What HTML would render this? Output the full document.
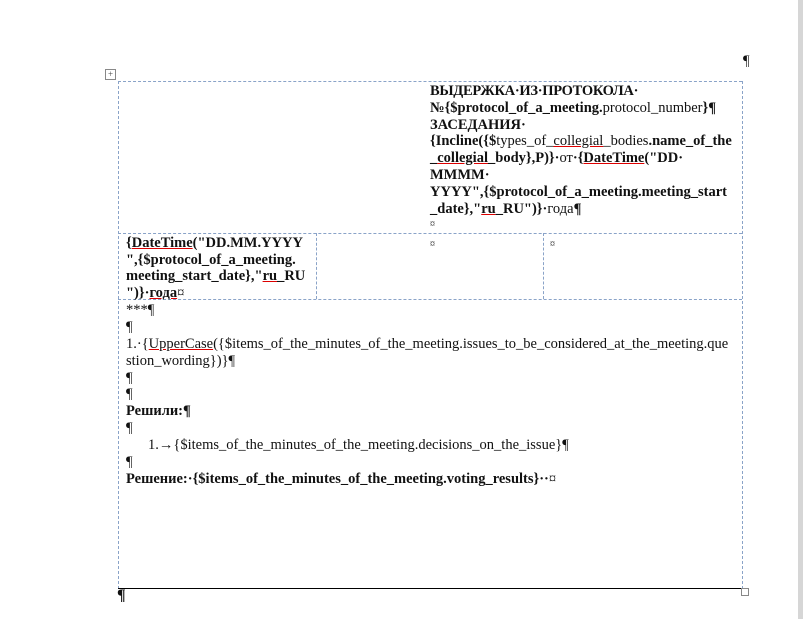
<!DOCTYPE html>
<html><head><meta charset="utf-8"><style>
body{margin:0;width:803px;height:619px;background:#fff;position:relative;overflow:hidden;font-family:"Liberation Serif",serif;font-size:14.5px;color:#111}
.l{position:absolute;white-space:nowrap;line-height:16px;margin-top:2px}
.b{font-weight:bold}
.dh{position:absolute;height:0;border-top:1px dashed #8aa3c8}
.dv{position:absolute;width:0;border-left:1px dashed #8aa3c8}
.u{text-decoration:underline;text-decoration-color:#d00}
</style></head><body>
<div style="position:absolute;right:0;top:0;width:5px;height:619px;background:#d6d6d6"></div>
<div class="l" style="left:743px;top:51px">¶</div>
<div style="position:absolute;left:105px;top:69px;width:9px;height:9px;border:1px solid #888;font-size:9px;line-height:9px;text-align:center;color:#444">+</div>
<div class="dh" style="left:118px;top:81px;width:624px"></div>
<div class="dh" style="left:118px;top:233px;width:624px"></div>
<div class="dh" style="left:118px;top:299px;width:624px"></div>
<div class="dv" style="left:118px;top:81px;height:508px"></div>
<div class="dv" style="left:742px;top:81px;height:508px"></div>
<div class="dv" style="left:316px;top:233px;height:66px"></div>
<div class="dv" style="left:543px;top:233px;height:66px"></div>
<div style="position:absolute;left:118px;top:588px;width:624px;height:1px;background:#000"></div>
<div style="position:absolute;left:741px;top:588px;width:6px;height:6px;border:1px solid #888"></div>
<div class="l b" style="left:117px;top:586px;font-size:16px">¶</div>

<div class="l b" style="left:430px;top:81px;letter-spacing:-0.3px">ВЫДЕРЖКА·ИЗ·ПРОТОКОЛА·</div>
<div class="l b" style="left:430px;top:98px">№{$protocol_of_a_meeting.<span style="font-weight:normal">protocol_number</span>}¶</div>
<div class="l b" style="left:430px;top:115px">ЗАСЕДАНИЯ·</div>
<div class="l b" style="left:430px;top:131px">{Incline({$<span style="font-weight:normal">types_of_<span class="u">collegial</span>_bodies</span>.name_of_the</div>
<div class="l b" style="left:430px;top:148px">_<span class="u">collegial</span>_body},P)}·<span style="font-weight:normal">от</span>·{<span class="u">DateTime</span>("DD·</div>
<div class="l b" style="left:430px;top:165px">MMMM·</div>
<div class="l b" style="left:430px;top:182px">YYYY",{$protocol_of_a_meeting.meeting_start</div>
<div class="l b" style="left:430px;top:199px">_date},"<span class="u">ru</span>_RU")}·<span style="font-weight:normal">года</span>¶</div>
<div class="l" style="left:430px;top:215px;font-size:10px">¤</div>

<div class="l b" style="left:126px;top:233px">{<span class="u">DateTime</span>("DD.MM.YYYY</div>
<div class="l b" style="left:126px;top:250px">",{$protocol_of_a_meeting.</div>
<div class="l b" style="left:126px;top:266px">meeting_start_date},"<span class="u">ru</span>_RU</div>
<div class="l b" style="left:126px;top:283px">")}·<span class="u">года</span><span style="font-weight:normal">¤</span></div>
<div class="l" style="left:430px;top:235px;font-size:10px">¤</div>
<div class="l" style="left:550px;top:235px;font-size:10px">¤</div>

<div class="l" style="left:126px;top:300px">***¶</div>
<div class="l" style="left:126px;top:317px">¶</div>
<div class="l" style="left:126px;top:334px">1.·{<span class="u">UpperCase</span>({$items_of_the_minutes_of_the_meeting.issues_to_be_considered_at_the_meeting.que</div>
<div class="l" style="left:126px;top:351px">stion_wording})}¶</div>
<div class="l" style="left:126px;top:368px">¶</div>
<div class="l" style="left:126px;top:384px">¶</div>
<div class="l b" style="left:126px;top:401px">Решили:¶</div>
<div class="l" style="left:126px;top:418px">¶</div>
<div class="l" style="left:148px;top:435px">1.→{$items_of_the_minutes_of_the_meeting.decisions_on_the_issue}¶</div>
<div class="l" style="left:126px;top:452px">¶</div>
<div class="l b" style="left:126px;top:469px">Решение:·{$items_of_the_minutes_of_the_meeting.voting_results}··<span style="font-weight:normal">¤</span></div>
</body></html>
